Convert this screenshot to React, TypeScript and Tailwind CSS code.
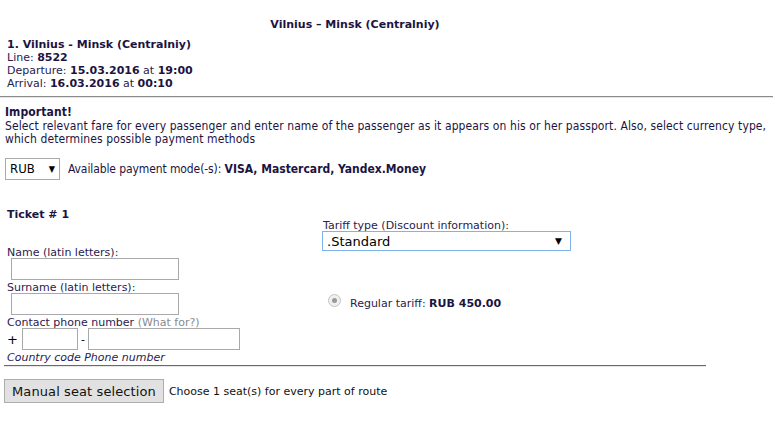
export default function App() {
    const label = 'text-[#2a2150]'
    const strong = 'font-bold text-[#1c1442]'
    return (
        <div className="w-[773px] h-[429px] bg-white font-['Verdana','DejaVu_Sans',sans-serif] text-[11px] leading-[13px] text-[#2a2150] overflow-hidden">
            <div className="w-[710px] pt-[18px] text-center font-bold text-[#1c1442]">
                Vilnius – Minsk (Centralniy)
            </div>

            <div className="pl-[7px] pt-[7px]">
                <div className={strong}>1. Vilnius - Minsk (Centralniy)</div>
                <div>
                    Line: <span className={strong}>8522</span>
                </div>
                <div>
                    Departure: <span className={strong}>15.03.2016</span> at{' '}
                    <span className={strong}>19:00</span>
                </div>
                <div>
                    Arrival: <span className={strong}>16.03.2016</span> at{' '}
                    <span className={strong}>00:10</span>
                </div>
            </div>

            <div className="mt-[6px] border-t border-b border-t-[#8a8a8a] border-b-[#e6e6e6]" />

            <div className="pl-[5px] pt-[7px] font-['DejaVu_Sans_Condensed','DejaVu_Sans',sans-serif] text-[12px] leading-[14px] tracking-[0.1px] text-[#1c1442]">
                <div className="font-bold">Important!</div>
                <div className="mt-[1px] leading-[13px]">
                    Select relevant fare for every passenger and enter name of the passenger as it appears on his or her passport. Also, select currency type,
                    <br />
                    which determines possible payment methods
                </div>
                <div className="mt-[12px] flex items-center">
                    <div className="w-[55px] h-[22px] border border-[#a9a9a9] bg-white flex items-center justify-between px-[4px] text-[13px] tracking-normal text-black">
                        <span>RUB</span>
                        <span className="text-[9px]">▼</span>
                    </div>
                    <span className="ml-[8px] tracking-[-0.1px]">
                        Available payment mode(-s):{' '}
                        <span className="font-bold tracking-[0px]">VISA, Mastercard, Yandex.Money</span>
                    </span>
                </div>
            </div>

            <div className="pl-[7px] pt-[28px]">
                <div className={strong}>Ticket # 1</div>
            </div>

            <div className="flex">
                <div className="w-[315px] pl-[7px] pt-[25px]">
                    <div className={label}>Name (latin letters):</div>
                    <div className="mt-[-1px] ml-[4px] w-[168px] h-[22px] border border-[#a9a9a9]" />
                    <div className="mt-[1px]">Surname (latin letters):</div>
                    <div className="mt-[-1px] ml-[4px] w-[168px] h-[22px] border border-[#a9a9a9]" />
                    <div className="mt-[1px]">
                        Contact phone number <span className="text-[#8a8a8a]">(What for?)</span>
                    </div>
                    <div className="flex items-center mt-[-1px] h-[22px]">
                        <span className="text-[13px] text-black">+</span>
                        <div className="ml-[4px] w-[56px] h-[22px] border border-[#a9a9a9]" />
                        <span className="ml-[3px] text-black">-</span>
                        <div className="ml-[3px] w-[152px] h-[22px] border border-[#a9a9a9]" />
                    </div>
                    <div className="mt-[1px] italic">Country code Phone number</div>
                </div>
                <div className="pl-[8px]">
                    <div className="mt-[-2px]">Tariff type (Discount information):</div>
                    <div className="mt-[-1px] ml-[-1px] w-[249px] h-[20px] border border-[#7eb4ea] flex items-center justify-between pl-[4px] pr-[8px] text-[13px] text-black">
                        <span>.Standard</span>
                        <span className="text-[9px]">▼</span>
                    </div>
                    <div className="mt-[39px] ml-[5px] flex items-center">
                        <span className="w-[13px] h-[13px] rounded-full border border-[#c4c4c4] bg-[#f0f0f0] flex items-center justify-center">
                            <span className="w-[5px] h-[5px] rounded-full bg-[#9a9a9a]" />
                        </span>
                        <span className="ml-[9px] mt-[7px]">
                            Regular tariff: <span className={strong}>RUB 450.00</span>
                        </span>
                    </div>
                </div>
            </div>

            <div className="ml-[4px] w-[702px] mt-[1px] border-t border-b border-t-[#6a6a6a] border-b-[#e6e6e6]" />

            <div className="flex items-center pl-[4px] pt-[12px]">
                <button className="h-[24px] px-[7px] border border-[#adadad] bg-[#e1e1e1] text-[13px] text-[#111] tracking-[0.1px] font-['Verdana','DejaVu_Sans',sans-serif]">
                    Manual seat selection
                </button>
                <span className="ml-[5px] text-[#111]">Choose 1 seat(s) for every part of route</span>
            </div>
        </div>
    )
}
